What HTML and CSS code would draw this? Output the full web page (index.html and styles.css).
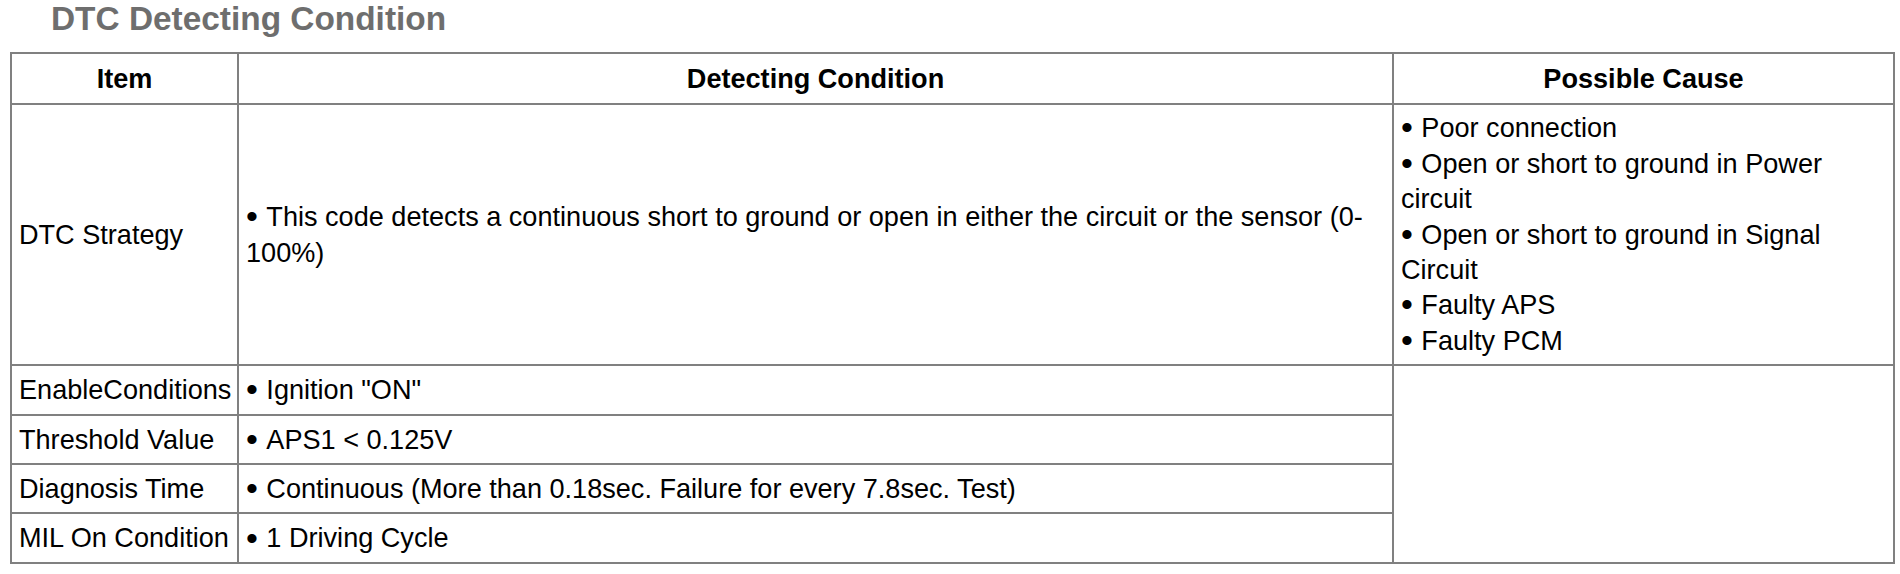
FILE: index.html
```html
<!DOCTYPE html>
<html>
<head>
<meta charset="utf-8">
<link rel="stylesheet" href="styles.css">
</head>
<body>
<h2 class="title">DTC Detecting Condition</h2>
<table class="dtc">
  <colgroup>
    <col class="c-item">
    <col class="c-cond">
    <col class="c-cause">
  </colgroup>
  <thead>
    <tr>
      <th>Item</th>
      <th>Detecting Condition</th>
      <th>Possible Cause</th>
    </tr>
  </thead>
  <tbody>
    <tr class="strategy">
      <td>DTC Strategy</td>
      <td><span class="li">This code detects a continuous short to ground or open in either the circuit or the sensor (0-100%)</span></td>
      <td class="cause"><span class="li">Poor connection</span><br><span class="li">Open or short to ground in Power circuit</span><br><span class="li">Open or short to ground in Signal Circuit</span><br><span class="li">Faulty APS</span><br><span class="li">Faulty PCM</span></td>
    </tr>
    <tr>
      <td>EnableConditions</td>
      <td><span class="li">Ignition "ON"</span></td>
      <td rowspan="4"></td>
    </tr>
    <tr>
      <td>Threshold Value</td>
      <td><span class="li">APS1 &lt; 0.125V</span></td>
    </tr>
    <tr>
      <td>Diagnosis Time</td>
      <td><span class="li">Continuous (More than 0.18sec. Failure for every 7.8sec. Test)</span></td>
    </tr>
    <tr>
      <td>MIL On Condition</td>
      <td><span class="li">1 Driving Cycle</span></td>
    </tr>
  </tbody>
</table>
</body>
</html>
```
FILE: styles.css
```css
html, body {
  margin: 0;
  padding: 0;
  background: #ffffff;
}
body {
  font-family: "Liberation Sans", Arial, sans-serif;
  color: #000;
}
.title {
  margin: 0 0 14px 51px;
  font-size: 33.4px;
  line-height: 38px;
  font-weight: bold;
  color: #6e6e6e;
}
.dtc {
  margin-left: 10px;
  width: 1883px;
  border-collapse: collapse;
  table-layout: fixed;
  font-size: 27.1px;
  line-height: 35.4px;
}
.c-item { width: 227px; }
.c-cond { width: 1155px; }
.c-cause { width: 501px; }
.dtc th,
.dtc td {
  border: 2px solid #808080;
  padding: 6px 7px;
  vertical-align: middle;
  text-align: left;
  font-weight: normal;
}
.dtc th {
  text-align: center;
  font-weight: bold;
  padding: 7px 7px;
}
.dtc td.cause {
  vertical-align: top;
  padding: 5px 7px 6px;
}
.dtc tbody tr td:first-child {
  padding-left: 7px;
  padding-right: 2px;
}
.li::before {
  content: "\2022";
  font-size: 1.25em;
  line-height: 0;
  vertical-align: -0.06em;
  margin-right: 8.5px;
}
```
